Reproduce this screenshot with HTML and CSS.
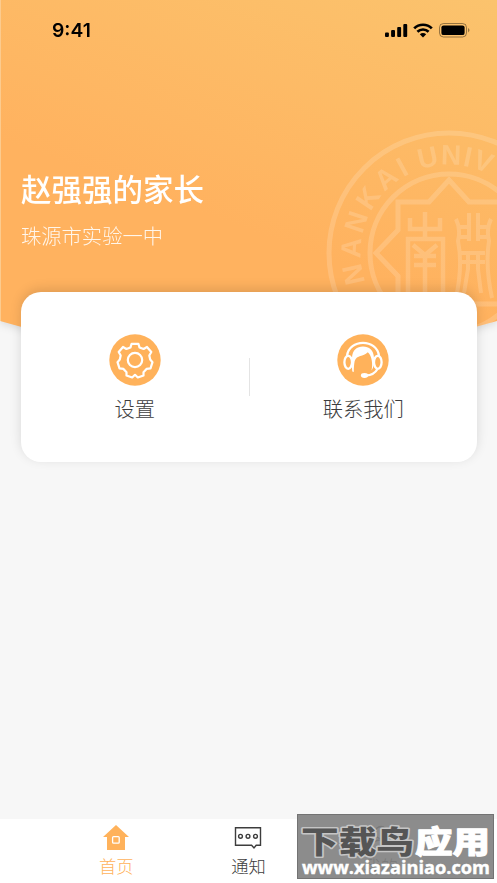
FILE: index.html
```html
<!DOCTYPE html>
<html lang="zh-CN">
<head>
<meta charset="utf-8">
<title>首页</title>
<link rel="stylesheet" href="styles.css">
</head>
<body>
<div class="app">
  <header class="hero">
    <div class="hero-shape"></div>
    <svg class="seal" viewBox="-124 -124 248 248" aria-hidden="true">
      <defs>
        <path id="ring" d="M-83.5 29 A88.4 88.4 0 1 1 83.5 29"/>
        <path id="ring-top" d="M-29 -83.5 A88.4 88.4 0 0 1 88.4 0"/>
      </defs>
      <g fill="none" stroke="#fff" stroke-width="5">
        <circle r="120"/><circle r="79"/>
        <path d="M0-73 20-51H51V-23L73 0 51 23V51H20L0 73-20 51H-51V23L-73 0-51-23V-51H-20Z"/>
        <path stroke-width="4.5" d="M-24-41V-15M-39-35V-24H-9V-35M-41 45V-14H-6V45M-36-8-24 2-12-8M-35 3H-13M-35 12H-13M-24 2V43"/>
        <path stroke-width="4" d="M7-34Q12-24 9-12Q14 12 7 45M20-40V-12M29-40V-12M42-34Q37-24 40-12Q36 12 43 45M9-26H20M9-16H20M29-26H40M29-16H40M12 0H36M12 9H36M19 0V16L15 40M29 0V16L32 40"/>
      </g>
      <g class="seal-text">
        <text><textPath href="#ring" textLength="128" lengthAdjust="spacing">NANKAI</textPath></text>
        <text letter-spacing="1.2"><textPath href="#ring-top">UNIV</textPath></text>
      </g>
    </svg>
    <div class="status">
      <span class="time">9:41</span>
      <svg class="signals" width="86" height="16" viewBox="0 0 86 16">
        <rect x="0" y="10.5" width="3.9" height="4.5" rx="1"/><rect x="6.1" y="8" width="3.9" height="7" rx="1"/><rect x="12.2" y="5" width="3.9" height="10" rx="1"/><rect x="18.3" y="2" width="3.9" height="13" rx="1"/>
        <g fill="none" stroke="#000" stroke-width="2.7"><path d="M29.2 6.4A12.4 12.4 0 0 1 46.8 6.4M32.4 9.8A8 8 0 0 1 43.6 9.8"/></g><path d="M34.8 12.2Q38 9.7 41.2 12.2L38 15.4Z"/>
        <rect x="54.5" y="1.5" width="27" height="13.5" rx="4" fill="none" stroke="#000" stroke-opacity=".4"/><rect x="56.4" y="3.4" width="23.2" height="9.7" rx="2.2"/><path d="M83 6Q86 8.2 83 10.5Z" opacity=".4"/>
      </svg>
    </div>
    <h1 class="name">赵强强的家长</h1>
    <p class="school">珠源市实验一中</p>
  </header>

  <main class="card">
    <div class="action">
      <svg class="action-icon" viewBox="0 0 52 52">
        <circle cx="26" cy="26" r="25.7" fill="#ffb25b"/>
        <g fill="none" stroke="#fff" stroke-width="2.2" stroke-linejoin="round"><circle cx="26" cy="26" r="7.2"/>
        <path d="M22.6 9.8H29.4L30.5 13.4 34.6 15 38 13 42.3 18 40.3 21.5 41.2 25.6 43.5 28.2 41.5 34.4 37.5 34.9 34.5 38.2 34.5 41.5 28.8 43.5 26 40.8 23.2 43.5 17.5 41.5 17.5 38.2 14.5 34.9 10.5 34.4 8.5 28.2 10.8 25.6 11.7 21.5 9.7 18 14 13 17.4 15 21.5 13.4Z"/></g>
      </svg>
      <span>设置</span>
    </div>
    <i class="divider"></i>
    <div class="action">
      <svg class="action-icon" viewBox="0 0 52 52">
        <circle cx="26" cy="26" r="25.7" fill="#ffb25b"/>
        <path fill="#fff" d="M15.3 37.5C14.8 33 14.8 29 15 24C15.3 16 20 12.5 26 12.5S36.7 16 37 24V30C36.5 32.5 35.5 35 34.5 36.5C36 30 35 22 30.8 18.2C26 23 20 20.5 17.7 27C17 30 16.8 34 16.8 38Z"/>
        <g fill="none" stroke="#fff" stroke-width="2.3"><ellipse cx="11.2" cy="28.3" rx="3.8" ry="6.5"/><ellipse cx="40.8" cy="28.3" rx="3.8" ry="6.5"/><path d="M10 22C12 4.5 40 4.5 42 22M40.5 35C38 39.5 34 41.3 29 41.5"/></g><ellipse cx="27.5" cy="41.5" rx="3.6" ry="2.4" fill="#fff"/>
      </svg>
      <span>联系我们</span>
    </div>
  </main>

  <nav class="tabs">
    <div class="tab active">
      <svg width="28" height="28" viewBox="0 0 28 28"><path fill="#ffb25b" d="M14 1 27 13H23V26H5V13H1Z"/><rect x="10.6" y="12.6" width="6.6" height="6.6" rx="1" fill="none" stroke="#fff" stroke-width="1.3"/></svg>
      <span>首页</span>
    </div>
    <div class="tab">
      <svg width="28" height="28" viewBox="0 0 28 28"><g fill="none" stroke="#3d3d3d" stroke-width="1.4"><path d="M1.5 3.8H26.5V21.2H22.2L20 24 17.6 21.2H1.5Z"/><circle cx="6.5" cy="12.3" r="1.9"/><circle cx="14" cy="12.3" r="1.9"/><circle cx="21.5" cy="12.3" r="1.9"/></g></svg>
      <span>通知</span>
    </div>
    <div class="tab">
      <svg width="28" height="28" viewBox="0 0 28 28"><g fill="none" stroke="#3d3d3d" stroke-width="1.4"><circle cx="14" cy="8.5" r="6"/><path d="M3 25C3 13 25 13 25 25Z"/></g></svg>
      <span>我的</span>
    </div>
  </nav>

  <div class="watermark">
    <svg width="197" height="66" viewBox="0 0 197 66">
      <g class="mark-title">
        <text class="mark-dark" x="4" y="39" textLength="113" lengthAdjust="spacingAndGlyphs">下载鸟</text>
        <text class="mark-light" x="118" y="39" textLength="75" lengthAdjust="spacingAndGlyphs">应用</text>
      </g>
      <text class="mark-url" x="5" y="60" textLength="188" lengthAdjust="spacingAndGlyphs">www.xiazainiao.com</text>
    </svg>
  </div>
</div>
</body>
</html>
```
FILE: styles.css
```css
* { box-sizing: border-box; }

body {
  margin: 0;
  color: #3d3d3d;
  font-family: "Noto Sans CJK SC", sans-serif;
}

.app {
  position: relative;
  display: flex;
  flex-direction: column;
  height: 883px;
  overflow: hidden;
  background: #f7f7f7;
}

.hero {
  position: relative;
  height: 292px;
  padding: 0 21px;
  flex: none;
  filter: drop-shadow(0 2px 4px rgba(0, 0, 0, .12));
}

.hero-shape {
  position: absolute;
  inset: 0 0 -110px 0;
  border-left: 1px solid #fccb8e;
  background: linear-gradient(20deg, #ffb25f 45%, #fbc36d 100%);
  clip-path: polygon(0 0, 100% 0, 100% 321px, 50% 390px, 0 321px);
}

.seal {
  position: absolute;
  left: 325px;
  top: 129px;
  width: 248px;
  height: 248px;
  opacity: .16;
  clip-path: polygon(0 0, 172px 0, 172px 192px, 152px 198px, 0 198px);
}

.seal-text {
  fill: #fff;
  font: 700 28px "Liberation Sans", sans-serif;
}

.status {
  position: relative;
  display: flex;
  align-items: center;
  justify-content: space-between;
  height: 60px;
  padding: 0 5px 0 31px;
}

.time {
  color: #000;
  font: 600 19.3px Inter, sans-serif;
}

.name {
  position: relative;
  margin: 106px 0 0;
  color: #fff;
  font-size: 30.5px;
  font-weight: 500;
  line-height: 44px;
}

.school {
  position: relative;
  margin: 10px 0 0;
  color: rgba(255, 255, 255, .88);
  font-size: 20.3px;
  font-weight: 300;
  line-height: 30px;
}

.card {
  position: relative;
  display: flex;
  flex: none;
  align-items: center;
  height: 170px;
  margin: 0 20px 0 21px;
  border-radius: 20px;
  background: #fff;
  box-shadow: 0 -3px 12px rgba(0, 0, 0, .13);
}

.action {
  display: flex;
  flex: 1;
  flex-direction: column;
  align-items: center;
  gap: 7px;
  padding-top: 3px;
  font-size: 20.3px;
  font-weight: 300;
  line-height: 30px;
}

.action-icon {
  width: 52px;
  height: 52px;
}

.divider {
  width: 1px;
  height: 38px;
  background: #e4e4e4;
}

.tabs {
  display: flex;
  height: 64px;
  margin-top: auto;
  padding: 5px 50px 0;
  background: #fff;
}

.tab {
  display: flex;
  flex: 1;
  flex-direction: column;
  align-items: center;
  font-size: 17.3px;
  font-weight: 300;
  line-height: 28px;
}

.active { color: #ffb25b; }

.watermark {
  position: absolute;
  left: 297px;
  top: 814px;
  width: 197px;
  height: 65px;
  border: 1px solid #737373;
  background: rgba(128, 128, 128, .9);
}

.watermark svg { display: block; margin: -1px; }

.mark-title {
  font-size: 31px;
  font-weight: 900;
  stroke-linejoin: round;
  paint-order: stroke;
}

.mark-dark {
  fill: #555;
  stroke: #c5c5c5;
  stroke-width: 3px;
}

.mark-light {
  fill: #fff;
  stroke: #fff;
  stroke-width: 1px;
}

.mark-url {
  fill: #fff;
  stroke: #fff;
  stroke-width: .4px;
  font: 700 17.5px "Open Sans", sans-serif;
}
```
